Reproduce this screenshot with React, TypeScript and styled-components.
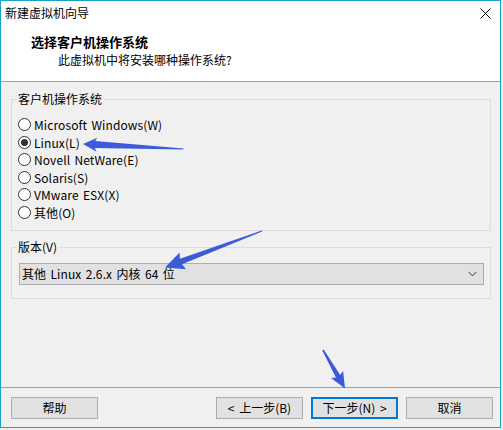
import React from "react";
import styled, { createGlobalStyle } from "styled-components";

const GlobalStyle = createGlobalStyle`
  html, body {
    margin: 0;
    padding: 0;
    background: #f0f0f0;
  }
  body {
    font-family: "Noto Sans CJK SC", "Noto Sans", sans-serif;
    font-size: 12px;
    color: #000;
    word-spacing: 1.5px;
  }
  * { box-sizing: border-box; }
`;

const Stage = styled.div`
  position: relative;
  width: 503px;
  height: 430px;
  overflow: hidden;
`;

const Window = styled.div`
  width: 501px;
  height: 428px;
  border: 1px solid #1ba1c9;
  display: flex;
  flex-direction: column;
  background: #f0f0f0;
`;

const TitleBar = styled.div`
  height: 24px;
  background: #fff;
  display: flex;
  align-items: center;
  justify-content: space-between;
  padding: 0 9px 0 4px;
  font-size: 12px;
  line-height: 24px;
`;

const CloseButton = styled.div`
  width: 12px;
  height: 12px;
  display: flex;
  align-items: center;
  justify-content: center;
  margin-top: 1px;
`;

const Header = styled.div`
  background: #fff;
  padding: 8px 0 12px 30px;
  border-bottom: 1px solid #a0a0a0;
`;

const HeaderTitle = styled.div`
  font-weight: bold;
  font-size: 13px;
  line-height: 18px;
`;

const HeaderSub = styled.div`
  font-size: 12px;
  line-height: 18px;
  padding-left: 27px;
`;

const Content = styled.div`
  flex: 1;
  padding: 9px 9px 0 10px;
  display: flex;
  flex-direction: column;
`;

const Group = styled.fieldset<{ $gap?: number }>`
  margin: ${(p) => p.$gap ?? 0}px 0 0 0;
  border: 1px solid #dcdcdc;
  padding: 0 6px 0 6px;
  min-width: 0;
`;

const Legend = styled.legend`
  padding: 0 2px;
  margin-left: -2px;
  font-size: 12px;
  line-height: 16px;
`;

const RadioList = styled.div`
  display: flex;
  flex-direction: column;
  padding: 9px 0 9px 0;
`;

const RadioRow = styled.label`
  display: flex;
  align-items: center;
  height: 17.5px;
  gap: 3px;
  font-size: 12px;
  line-height: 17px;
  white-space: nowrap;
  letter-spacing: 0.1px;
`;

const RadioCircle = styled.span<{ $checked?: boolean }>`
  width: 13px;
  height: 13px;
  border-radius: 50%;
  border: 1px solid #333;
  background: #fff;
  display: flex;
  align-items: center;
  justify-content: center;
  flex-shrink: 0;
  &::after {
    content: "";
    width: 7px;
    height: 7px;
    border-radius: 50%;
    background: ${(p) => (p.$checked ? "#333" : "transparent")};
  }
`;

const SelectBox = styled.div`
  margin: 8px 0 13px 1px;
  height: 22px;
  background: #e1e1e1;
  border: 1px solid #adadad;
  display: flex;
  align-items: center;
  justify-content: space-between;
  padding: 0 6px 0 2px;
  font-size: 12px;
  line-height: 20px;
  letter-spacing: 0.1px;
`;

const Footer = styled.div`
  border-top: 1px solid #a0a0a0;
  height: 40px;
  padding: 9px 7px 0 10px;
  display: flex;
  gap: 8px;
`;

const Spacer = styled.div`
  flex: 1;
`;

const Button = styled.div<{ $default?: boolean }>`
  width: 87px;
  height: 22px;
  background: #e1e1e1;
  border: ${(p) => (p.$default ? "2px solid #0078d7" : "1px solid #adadad")};
  display: flex;
  align-items: center;
  justify-content: center;
  font-size: 12px;
  line-height: 18px;
  white-space: nowrap;
  word-spacing: 2px;
`;

const Annotations = styled.svg`
  position: absolute;
  left: 0;
  top: 0;
  pointer-events: none;
`;

const osOptions = [
  "Microsoft Windows(W)",
  "Linux(L)",
  "Novell NetWare(E)",
  "Solaris(S)",
  "VMware ESX(X)",
  "其他(O)",
];

function arrow(
  tail: [number, number],
  tip: [number, number],
  headLen: number,
  headHalf: number,
  shaftHalf: number,
  tailHalf: number
) {
  const dx = tip[0] - tail[0];
  const dy = tip[1] - tail[1];
  const len = Math.hypot(dx, dy);
  const ux = dx / len;
  const uy = dy / len;
  const px = -uy;
  const py = ux;
  const bx = tip[0] - ux * headLen;
  const by = tip[1] - uy * headLen;
  const pts: [number, number][] = [
    tip,
    [bx + px * headHalf, by + py * headHalf],
    [bx + ux * 2 + px * shaftHalf, by + uy * 2 + py * shaftHalf],
    [tail[0] + px * tailHalf, tail[1] + py * tailHalf],
    [tail[0] - px * tailHalf, tail[1] - py * tailHalf],
    [bx + ux * 2 - px * shaftHalf, by + uy * 2 - py * shaftHalf],
    [bx - px * headHalf, by - py * headHalf],
  ];
  return pts.map((p) => `${p[0].toFixed(1)},${p[1].toFixed(1)}`).join(" ");
}

export default function App() {
  return (
    <Stage>
      <GlobalStyle />
      <Window>
        <TitleBar>
          <span>新建虚拟机向导</span>
          <CloseButton>
            <svg width="11" height="11" viewBox="0 0 11 11">
              <path d="M0.5 0.5 L10.5 10.5 M10.5 0.5 L0.5 10.5" stroke="#000" strokeWidth="1" />
            </svg>
          </CloseButton>
        </TitleBar>
        <Header>
          <HeaderTitle>选择客户机操作系统</HeaderTitle>
          <HeaderSub>此虚拟机中将安装哪种操作系统?</HeaderSub>
        </Header>
        <Content>
          <Group>
            <Legend>客户机操作系统</Legend>
            <RadioList>
              {osOptions.map((o) => (
                <RadioRow key={o}>
                  <RadioCircle $checked={o === "Linux(L)"} />
                  <span>{o}</span>
                </RadioRow>
              ))}
            </RadioList>
          </Group>
          <Group $gap={8}>
            <Legend>版本(V)</Legend>
            <SelectBox>
              <span>其他 Linux 2.6.x 内核 64 位</span>
              <svg width="9" height="6" viewBox="0 0 9 6">
                <path d="M0.5 0.8 L4.5 4.8 L8.5 0.8" stroke="#333" strokeWidth="1" fill="none" />
              </svg>
            </SelectBox>
          </Group>
        </Content>
        <Footer>
          <Button>帮助</Button>
          <Spacer />
          <Button>&lt; 上一步(B)</Button>
          <Button $default>下一步(N) &gt;</Button>
          <Button>取消</Button>
        </Footer>
      </Window>
      <Annotations width="503" height="430" viewBox="0 0 503 430">
        <polygon points={arrow([183.5, 149], [83, 144], 14, 7, 3.5, 0.5)} fill="#3b5bd9" />
        <polygon points={arrow([262, 231], [165, 267.5], 19, 9, 3, 0.6)} fill="#3b5bd9" />
        <polygon points={arrow([323, 350], [345, 388.5], 16, 7, 2.5, 0.8)} fill="#3b5bd9" />
      </Annotations>
    </Stage>
  );
}
